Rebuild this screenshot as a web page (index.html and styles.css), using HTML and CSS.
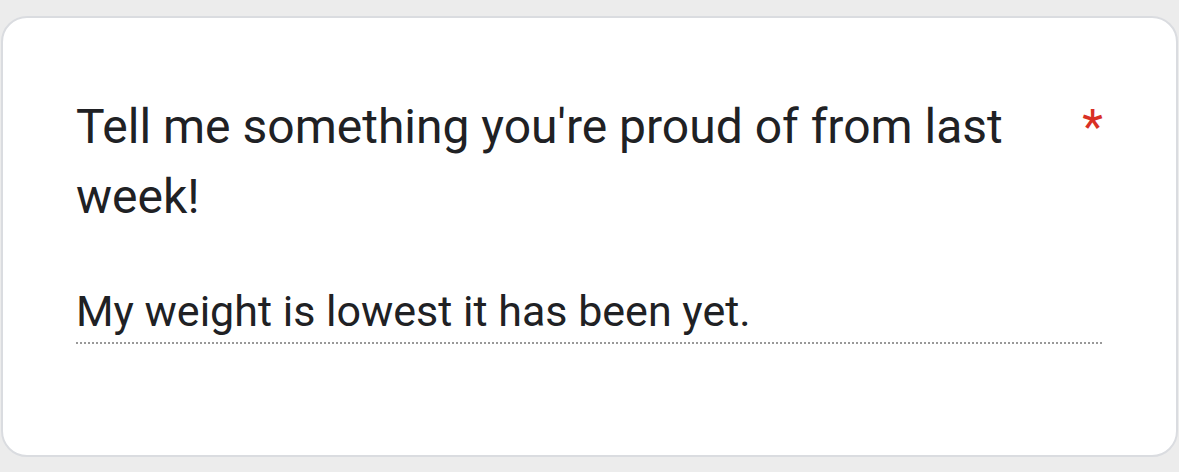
FILE: index.html
```html
<!DOCTYPE html>
<html>
<head>
<meta charset="utf-8">
<link rel="stylesheet" href="styles.css">
</head>
<body>
  <div class="card">
    <div class="question">
      <div class="title">Tell me something you're proud of from last week!</div>
      <span class="required">*</span>
    </div>
    <div class="answer">My weight is lowest it has been yet.</div>
  </div>
</body>
</html>
```
FILE: styles.css
```css
html, body {
  margin: 0;
  padding: 0;
  background: #ececec;
}
body {
  width: 1179px;
  height: 472px;
  overflow: hidden;
  font-family: Roboto, "Noto Sans", sans-serif;
  color: #202124;
}
.card {
  box-sizing: border-box;
  margin: 16px 1px 0 1px;
  height: 441px;
  background: #fff;
  border: 2px solid #dadce0;
  border-radius: 26px;
  padding: 74px 72px 0 73px;
}
.question {
  display: flex;
  align-items: flex-start;
  justify-content: space-between;
  gap: 24px;
}
.title {
  font-size: 48px;
  line-height: 70px;
  max-width: 960px;
}
.required {
  color: #d93025;
  font-size: 48px;
  line-height: 70px;
  margin-right: 1px;
}
.answer {
  margin-top: 53px;
  font-size: 43px;
  line-height: 52px;
  padding-bottom: 7px;
  background-image: linear-gradient(to right, #999999 2px, transparent 2px);
  background-size: 4px 2px;
  background-repeat: repeat-x;
  background-position: left bottom;
}
```
